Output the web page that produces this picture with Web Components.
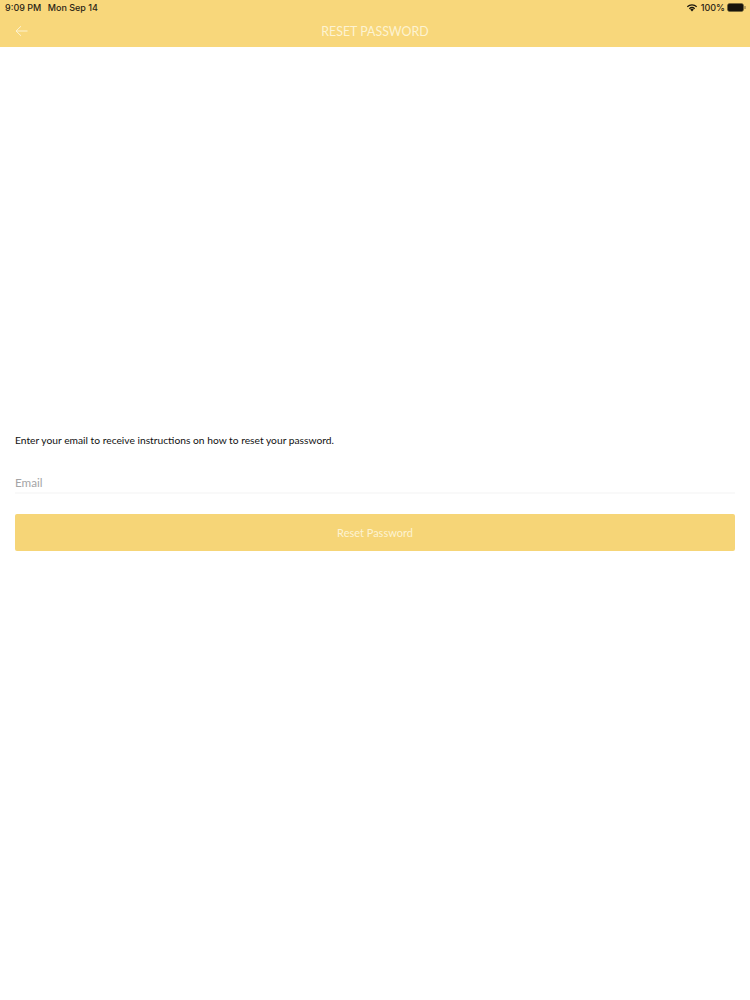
<!DOCTYPE html>
<html>
<head>
<meta charset="utf-8">
<title>Reset Password</title>
<style>
  html, body { margin: 0; padding: 0; background: #fff; }
  body { width: 750px; height: 1000px; overflow: hidden; font-family: Lato, "Liberation Sans", sans-serif; }
</style>
</head>
<body>
<app-header title="RESET PASSWORD"></app-header>
<reset-form></reset-form>

<script>
class StatusBar extends HTMLElement {
  constructor() {
    super();
    this.attachShadow({ mode: 'open' });
    this.shadowRoot.innerHTML = `
      <style>
        :host {
          display: flex;
          justify-content: space-between;
          align-items: center;
          height: 15px;
          padding: 0 4px 0 5px;
          font: 500 9px/15px Inter, "Liberation Sans", sans-serif;
          color: #2a2415;
        }
        .left span + span { margin-left: 6.5px; }
        .right { display: flex; align-items: center; gap: 2px; }
        .wifi { margin-right: 1px; }
      </style>
      <div class="left"><span>9:09 PM</span><span>Mon Sep 14</span></div>
      <div class="right">
        <svg class="wifi" width="12" height="9" viewBox="0 0 12 9">
          <path d="M6 8.6 4.2 6.6a2.6 2.6 0 0 1 3.6 0z" fill="#17140c"/>
          <path d="M2.9 5.3a4.5 4.5 0 0 1 6.2 0l-.8.9a3.4 3.4 0 0 0-4.6 0z" fill="#17140c"/>
          <path d="M.9 3.3a7.4 7.4 0 0 1 10.2 0l-.8.9a6.2 6.2 0 0 0-8.6 0z" fill="#17140c"/>
        </svg>
        <span>100%</span>
        <svg width="19" height="9" viewBox="0 0 19 9">
          <rect x=".5" y=".5" width="16" height="8" rx="2" fill="#17140c" stroke="#6d5f35" stroke-width=".6"/>
          <rect x="17.4" y="3" width="1.2" height="3" rx=".5" fill="#8a7a48"/>
        </svg>
      </div>
    `;
  }
}

class AppHeader extends HTMLElement {
  constructor() {
    super();
    this.attachShadow({ mode: 'open' });
  }

  connectedCallback() {
    this.shadowRoot.innerHTML = `
      <style>
        :host {
          display: block;
          background: #f8d77b;
          height: 47px;
        }
        .bar {
          display: flex;
          align-items: center;
          justify-content: center;
          position: relative;
          height: 32px;
          color: #fdf3d2;
          font: 400 12.4px/16px Lato, "Liberation Sans", sans-serif;
        }
        .bar span { padding-top: 2px; }
        svg { position: absolute; left: 15px; top: 10px; }
      </style>
      <status-bar></status-bar>
      <div class="bar">
        <svg width="13" height="12" viewBox="0 0 13 12" fill="none" stroke="#fdf3d2" stroke-width="1">
          <path d="M12.5 6H1M6 1.2 1 6l5 4.8"/>
        </svg>
        <span>${this.getAttribute('title')}</span>
      </div>
    `;
  }
}

class ResetForm extends HTMLElement {
  constructor() {
    super();
    this.attachShadow({ mode: 'open' });
    this.shadowRoot.innerHTML = `
      <style>
        :host {
          display: block;
          padding: 386px 15px 0;
          font-family: Lato, "Liberation Sans", sans-serif;
        }
        p {
          margin: 0;
          font-size: 10.25px;
          line-height: 14px;
          color: #111;
        }
        .field {
          margin-top: 28px;
          height: 17px;
          border-bottom: 2px solid #f9f9f9;
          font-size: 11.7px;
          line-height: 15px;
          color: #a4a4a6;
        }
        .btn {
          margin-top: 20px;
          height: 37px;
          background: #f6d577;
          border-radius: 2px;
          color: #fdf3d2;
          font-size: 11px;
          line-height: 37px;
          text-align: center;
        }
      </style>
      <p>Enter your email to receive instructions on how to reset your password.</p>
      <div class="field">Email</div>
      <div class="btn">Reset Password</div>
    `;
  }
}

customElements.define('status-bar', StatusBar);
customElements.define('app-header', AppHeader);
customElements.define('reset-form', ResetForm);
</script>
</body>
</html>
